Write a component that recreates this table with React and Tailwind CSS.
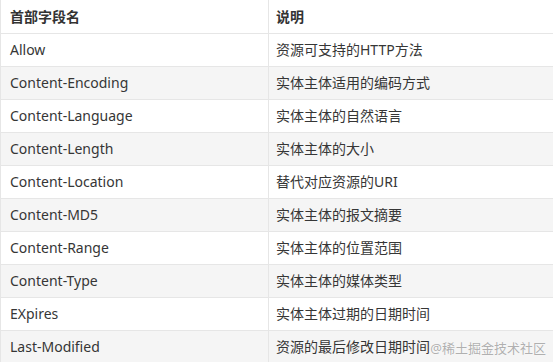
import React from "react";

const ROWS = [
  ["Allow", "资源可支持的HTTP方法"],
  ["Content-Encoding", "实体主体适用的编码方式"],
  ["Content-Language", "实体主体的自然语言"],
  ["Content-Length", "实体主体的大小"],
  ["Content-Location", "替代对应资源的URI"],
  ["Content-MD5", "实体主体的报文摘要"],
  ["Content-Range", "实体主体的位置范围"],
  ["Content-Type", "实体主体的媒体类型"],
  ["EXpires", "实体主体过期的日期时间"],
  ["Last-Modified", "资源的最后修改日期时间"],
];

const font = { fontFamily: '"Noto Sans", "Noto Sans CJK SC", sans-serif' };

export default function App() {
  return (
    <div className="relative w-[553px] h-[362px] overflow-hidden bg-white" style={font}>
      <table className="w-[600px] border-collapse text-[14px] text-[#363636]">
        <thead>
          <tr className="h-[33px] bg-white">
            <th className="w-[268px] border border-[#e6e6e6] border-t-0 pl-[9px] text-left font-bold text-[#333]">首部字段名</th>
            <th className="border border-[#e6e6e6] border-t-0 pl-[7px] text-left font-bold text-[#333]">说明</th>
          </tr>
        </thead>
        <tbody>
          {ROWS.map(([k, v], i) => (
            <tr key={k} className={"h-[33px] " + (i % 2 ? "bg-[#f5f5f5]" : "bg-white")}>
              <td className="border border-[#e6e6e6] pl-[9px]">{k}</td>
              <td className="border border-[#e6e6e6] pl-[7px]">{v}</td>
            </tr>
          ))}
        </tbody>
      </table>

      {/* watermark */}
      <div className="absolute right-[7px] bottom-[7px] text-[13px] leading-none text-[#b0b0b0] [text-shadow:0_0_1px_#fff,0_0_1px_#fff]">
        @稀土掘金技术社区
      </div>
    </div>
  );
}
